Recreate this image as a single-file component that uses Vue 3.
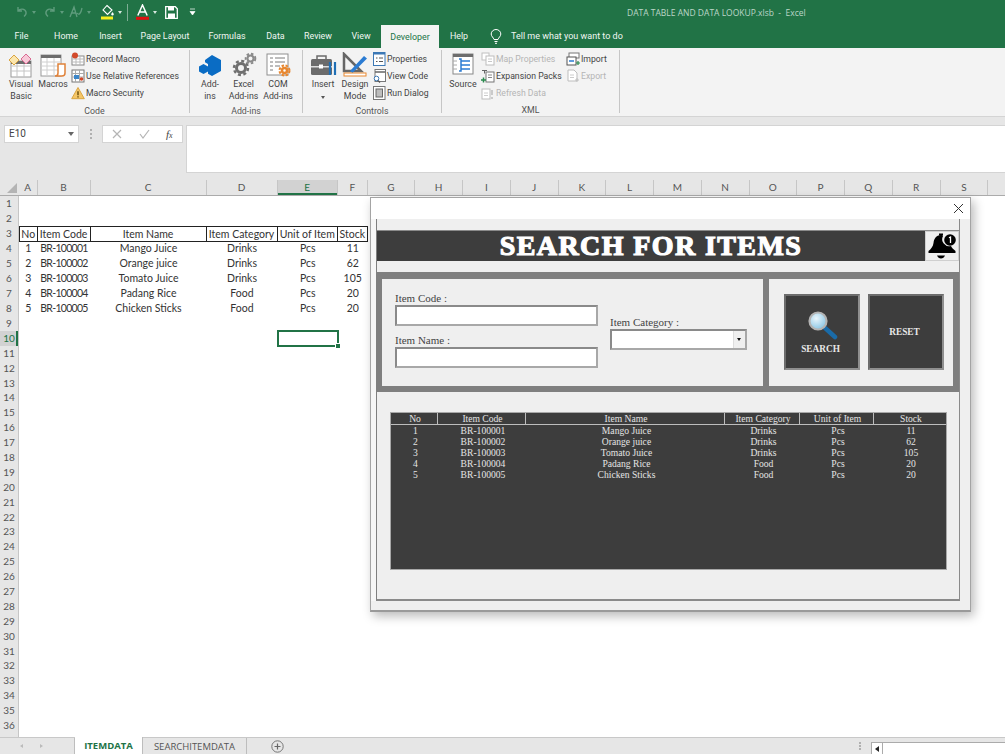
<script setup>
const tabs = ['File','Home','Insert','Page Layout','Formulas','Data','Review','View','Developer','Help']
const cols = ['A','B','C','D','E','F','G','H','I','J','K','L','M','N','O','P','Q','R','S']
const rows = Array.from({ length: 37 }, (_, i) => i + 1)
const sheet = {
  3: ['No','Item Code','Item Name','Item Category','Unit of Item','Stock'],
  4: ['1','BR-100001','Mango Juice','Drinks','Pcs','11'],
  5: ['2','BR-100002','Orange juice','Drinks','Pcs','62'],
  6: ['3','BR-100003','Tomato Juice','Drinks','Pcs','105'],
  7: ['4','BR-100004','Padang Rice','Food','Pcs','20'],
  8: ['5','BR-100005','Chicken Sticks','Food','Pcs','20']
}
const blank = ['','','','','','']
const cellsOf = r => sheet[r] || blank
const formHead = ['No','Item Code','Item Name','Item Category','Unit of Item','Stock']
const formRows = [4,5,6,7,8].map(r => sheet[r])
</script>

<template>
  <div class="app">
    <header class="titlebar">
      <div class="qat">
        <svg class="q q-undo" width="14" height="14" viewBox="0 0 14 14"><path d="M3 2v4h4M3 6c2-2.600 7-2.600 8 1 .4 1.800-.6 3.500-2 4.500" fill="none" stroke="#5f9c7d" stroke-width="1.400"/></svg>
        <span class="chev dim q-c1"></span>
        <svg class="q q-redo" width="14" height="14" viewBox="0 0 14 14"><path d="M11 2v4H7M11 6C9 3.400 4 3.400 3 7c-.4 1.800.6 3.500 2 4.500" fill="none" stroke="#5f9c7d" stroke-width="1.400"/></svg>
        <span class="chev dim q-c2"></span>
        <svg class="q q-rep" width="14" height="14" viewBox="0 0 14 14"><path d="M1 12 5 2l3 10M3 8h4M8 8c2 3 4 0 5-5" fill="none" stroke="#5f9c7d" stroke-width="1.300"/></svg>
        <span class="chev dim q-c3"></span>
        <svg class="q q-fill" width="14" height="16" viewBox="0 0 14 16"><path d="M6 1.500 11 6 6.500 10.500 2 6z" fill="#217346" stroke="#fff" stroke-width="1.100"/><path d="M11.500 8c.8 1 1.200 1.600 1.200 2.200a1.200 1.200 0 0 1-2.400 0c0-.6.400-1.200 1.200-2.200z" fill="#fff"/><rect x="0" y="12.500" width="12" height="3" fill="#f4ee1c"/></svg>
        <span class="chev q-c4"></span>
        <i class="q-sep"></i>
        <svg class="q q-font" width="13" height="16" viewBox="0 0 13 16"><path d="M1.800 11.500 6.500 1l4.700 10.500M3.500 8h6" fill="none" stroke="#fff" stroke-width="1.500"/><rect x="0" y="12.800" width="13" height="3" fill="#e01010"/></svg>
        <span class="chev q-c5"></span>
        <svg class="q q-save" width="13" height="13" viewBox="0 0 13 13"><path d="M.7.700h9.600l2 2v9.600H.7z" fill="none" stroke="#fff" stroke-width="1.300"/><rect x="3" y="1" width="6" height="3.500" fill="#fff"/><rect x="3" y="7.500" width="7" height="4.500" fill="#fff"/></svg>
        <svg class="q q-cust" width="7" height="8" viewBox="0 0 7 8"><path d="M1 1h5M1 3.500h5L3.500 7z" fill="#fff" stroke="#fff" stroke-width=".7"/></svg>
      </div>
      <div class="doc">DATA TABLE AND DATA LOOKUP.xlsb &nbsp;-&nbsp; Excel</div>
    </header>

    <nav class="tabbar">
      <span v-for="t in tabs" :key="t" class="tab" :class="{ on: t === 'Developer' }">{{ t }}</span>
      <span class="tell">
        <svg width="12" height="15" viewBox="0 0 12 15"><path d="M4 10.500C3.500 8.500 1.200 7.500 1.200 5a4.800 4.500 0 0 1 9.600 0c0 2.500-2.300 3.500-2.800 5.500zM4.500 12.500h3M5 14.300h2" fill="none" stroke="#fff" stroke-width="1"/></svg>
        <b>Tell me what you want to do</b>
      </span>
    </nav>

    <section class="ribbon">
      <div class="grp g-code">
        <div class="items">
          <div class="big w34">
            <svg class="ico" width="28" height="26" viewBox="0 0 28 26"><rect x="4" y="9" width="20" height="16" fill="#fff" stroke="#9a9a9a"/><path d="M4 14h20M4 19h20M10 9v16M17 9v16" stroke="#c4c4c4"/><rect x="4" y="9" width="20" height="3" fill="#6d6d6d"/><path d="m7 3 5 5-5 5-5-5z" fill="#fbe6ad" stroke="#d9a441"/><path d="m19 2 5 5-5 5-5-5z" fill="#f7c9d8" stroke="#d96a92"/></svg>
            <span>Visual<br>Basic</span>
          </div>
          <div class="big w30">
            <svg class="ico" width="28" height="26" viewBox="0 0 28 26"><rect x="2" y="3" width="20" height="21" fill="#fff" stroke="#9a9a9a"/><rect x="2" y="3" width="20" height="3" fill="#6d6d6d"/><path d="M2 10h20M2 14h20M2 18h20M8 6v18M15 6v18" stroke="#d0d0d0"/><path d="M19 12h7v9a3 3 0 0 1-3 3h-7c2 0 3-1 3-3z" fill="#fff" stroke="#e0823a" stroke-width="1.500"/></svg>
            <span>Macros</span>
          </div>
          <div class="stack s-code">
            <div class="sm"><svg width="14" height="14" viewBox="0 0 14 14"><rect x="1" y="4" width="12" height="9" fill="#fff" stroke="#888"/><path d="M1 7h12M1 10h12M5 4v9M9 4v9" stroke="#bbb"/><circle cx="4" cy="3.500" r="3" fill="#d2492a"/></svg>Record Macro</div>
            <div class="sm"><svg width="14" height="14" viewBox="0 0 14 14"><rect x="1" y="1" width="12" height="12" fill="#fff" stroke="#777"/><path d="M1 4.500h12M1 8h12M4.500 1v12M8.500 1v12" stroke="#aaa"/><rect x="3" y="6" width="5" height="4" fill="#3c86c8"/><circle cx="10.500" cy="10" r="1.800" fill="#d2492a"/></svg>Use Relative References</div>
            <div class="sm"><svg width="14" height="14" viewBox="0 0 14 14"><path d="M7 1.500 13.300 12.700H.7z" fill="#f5c667" stroke="#d9a441"/><path d="M7 5.200v4M7 10.200v1.300" stroke="#5a4000" stroke-width="1.300"/></svg>Macro Security</div>
          </div>
        </div>
        <div class="glabel">Code</div>
      </div>

      <div class="grp g-addins">
        <div class="items">
          <div class="big w34">
            <svg class="ico" width="28" height="26" viewBox="0 0 28 26"><path d="m16 3 9 5v11l-9 5-4-2.300V12l-3-1.700V8z" fill="#0a6cc4"/><path d="m7.500 12 4.500 2.500v5L7.500 22 3 19.500v-5z" fill="#0a6cc4"/></svg>
            <span>Add-<br>ins</span>
          </div>
          <div class="big w33">
            <svg class="ico" width="28" height="26" viewBox="0 0 28 26"><circle cx="11" cy="16" r="4.500" fill="none" stroke="#6f6f6f" stroke-width="3"/><circle cx="11" cy="16" r="7" fill="none" stroke="#6f6f6f" stroke-width="2.500" stroke-dasharray="3 2.500"/><circle cx="20.500" cy="6.500" r="3" fill="none" stroke="#8a8a8a" stroke-width="2"/><circle cx="20.500" cy="6.500" r="4.800" fill="none" stroke="#8a8a8a" stroke-width="2" stroke-dasharray="2.500 2"/></svg>
            <span>Excel<br>Add-ins</span>
          </div>
          <div class="big w36">
            <svg class="ico" width="28" height="26" viewBox="0 0 28 26"><rect x="3" y="2" width="21" height="21" fill="#fff" stroke="#8f8f8f"/><path d="M6 6h3M11 6h10M6 10h3M11 10h10M6 14h3M11 14h5M6 18h3" stroke="#7a7a7a"/><circle cx="20.500" cy="18.500" r="2.500" fill="none" stroke="#e8872f" stroke-width="2.500"/><circle cx="20.500" cy="18.500" r="5" fill="none" stroke="#e8872f" stroke-width="2" stroke-dasharray="2.500 1.500"/></svg>
            <span>COM<br>Add-ins</span>
          </div>
        </div>
        <div class="glabel">Add-ins</div>
      </div>

      <div class="grp g-ctrl">
        <div class="items">
          <div class="big w32">
            <svg class="ico" width="28" height="26" viewBox="0 0 28 26"><path d="M8 7V4h9v3" fill="none" stroke="#6b6b6b" stroke-width="1.500"/><rect x="2" y="7" width="21" height="16" rx="1.500" fill="#6b6b6b"/><rect x="2" y="14" width="21" height="1.500" fill="#ddd"/><rect x="10" y="12.500" width="4" height="4" fill="#fff"/><path d="M21 10v13M26 10v13" stroke="#1f6fb5" stroke-width="2.200"/></svg>
            <span>Insert<br><i class="chev dark"></i></span>
          </div>
          <div class="big w32">
            <svg class="ico" width="28" height="26" viewBox="0 0 28 26"><path d="M3 2v17h17z" fill="none" stroke="#666" stroke-width="2.500"/><path d="M9 19 23 4l3 2.500L11.500 21z" fill="#2b7cd3"/><rect x="3" y="21" width="22" height="3" fill="#fff" stroke="#e8872f"/></svg>
            <span>Design<br>Mode</span>
          </div>
          <div class="stack s-ctrl">
            <div class="sm"><svg width="13" height="14" viewBox="0 0 13 14"><rect x=".5" y=".5" width="11.500" height="13" fill="#fff" stroke="#3c78b5"/><rect x=".5" y=".5" width="11.500" height="2" fill="#3c78b5"/><path d="M3 6h1.500M6 6h4M3 9.500h1.500M6 9.500h4" stroke="#555"/></svg>Properties</div>
            <div class="sm"><svg width="13" height="14" viewBox="0 0 13 14"><rect x="2" y=".5" width="10.500" height="12" fill="#fff" stroke="#777"/><path d="M2 3h10" stroke="#666" stroke-width="1.500"/><circle cx="3.500" cy="9.500" r="2.300" fill="#fff" stroke="#3c78b5"/><path d="M5 11.500l2 2" stroke="#555" stroke-width="1.200"/></svg>View Code</div>
            <div class="sm"><svg width="13" height="14" viewBox="0 0 13 14"><rect x=".5" y=".5" width="11.500" height="13" fill="#fff" stroke="#777"/><rect x="3" y="3" width="6.500" height="8" fill="#bdbdbd" stroke="#666"/></svg>Run Dialog</div>
          </div>
        </div>
        <div class="glabel">Controls</div>
      </div>

      <div class="grp g-xml">
        <div class="items">
          <div class="big w34">
            <svg class="ico" width="28" height="26" viewBox="0 0 28 26"><rect x="4" y="2" width="20" height="20" fill="#fff" stroke="#888"/><rect x="4" y="2" width="20" height="3" fill="#6d6d6d"/><path d="M4 9h4M4 13h4M4 17h4" stroke="#aaa"/><path d="M10 7h2v12h-2M12 9h9M12 13h9M12 17h9" fill="none" stroke="#2b7cd3" stroke-width="1.500"/></svg>
            <span>Source</span>
          </div>
          <div class="stack s-xml1">
            <div class="sm off"><svg width="14" height="14" viewBox="0 0 14 14"><rect x="1" y="1" width="7" height="7" fill="#fff" stroke="#c0c0c0"/><rect x="5" y="4" width="8" height="9" fill="#fff" stroke="#bdbdbd"/><path d="M7 7h4M7 9.500h4" stroke="#c8c8c8"/></svg>Map Properties</div>
            <div class="sm"><svg width="14" height="14" viewBox="0 0 14 14"><rect x="5" y="3" width="8" height="10" fill="#fff" stroke="#777"/><path d="M7 6h4M7 8.500h4" stroke="#888"/><path d="M1 1.500h5M3.500 1.500v3" stroke="#666"/><path d="M0 11h5M2.500 8.500v5" stroke="#2a8a4e" stroke-width="1.500"/></svg>Expansion Packs</div>
            <div class="sm off"><svg width="14" height="14" viewBox="0 0 14 14"><rect x="1" y="3" width="8" height="10" fill="#fff" stroke="#bdbdbd"/><path d="M11 4v5M11 11v2" stroke="#bdbdbd" stroke-width="1.500"/><path d="M3 7h4M3 9.500h4" stroke="#ccc"/></svg>Refresh Data</div>
          </div>
          <div class="stack">
            <div class="sm"><svg width="14" height="14" viewBox="0 0 14 14"><rect x="3" y="1" width="10" height="5" fill="#fff" stroke="#777"/><rect x="1" y="5" width="9" height="8" fill="#fff" stroke="#555"/><path d="M3 9h5" stroke="#2b7cd3" stroke-width="1.500"/><path d="M10 11h4M12 9v4" stroke="#2a8a4e" stroke-width="1.200"/></svg>Import</div>
            <div class="sm off"><svg width="14" height="14" viewBox="0 0 14 14"><path d="M2 1h6l3 3v8H2z" fill="#fff" stroke="#bdbdbd"/><path d="M4 6h4M4 8.500h4" stroke="#ccc"/><path d="M9 11h4M11 9v4" stroke="#c0c0c0"/></svg>Export</div>
          </div>
        </div>
        <div class="glabel">XML</div>
      </div>
    </section>

    <section class="formula">
      <div class="namebox">E10<span class="drop"></span></div>
      <div class="grip"><i></i><i></i><i></i></div>
      <div class="fxbox">
        <svg width="10" height="10" viewBox="0 0 10 10"><path d="m1 1 8 8M9 1 1 9" stroke="#b5b5b5" stroke-width="1.200"/></svg>
        <svg width="11" height="10" viewBox="0 0 11 10"><path d="m1 5 3 4 6-8" fill="none" stroke="#b5b5b5" stroke-width="1.200"/></svg>
        <em>f<small>x</small></em>
      </div>
      <div class="fbar"></div>
    </section>

    <section class="sheet">
      <div class="line head">
        <div class="corner"><svg width="12" height="12" viewBox="0 0 12 12"><path d="M11 1v10H1z" fill="#b4b4b4"/></svg></div>
        <div v-for="c in cols" :key="c" class="colh" :class="{ sel: c === 'E' }">{{ c }}</div>
        <div class="colh rest"></div>
      </div>
      <div class="cells">
        <div v-for="r in rows" :key="r" class="line">
          <div class="rowh" :class="{ sel: r === 10 }">{{ r < 37 ? r : '' }}</div>
          <div
            v-for="(v, i) in cellsOf(r)"
            :key="i"
            class="cell"
            :class="{ hd: r === 3, code: i === 1 && r > 3, active: r === 10 && i === 4 }"
          >{{ v }}</div>
        </div>
      </div>

      <div class="dialog">
        <div class="dtitle">
          <svg width="11" height="11" viewBox="0 0 11 11"><path d="m1 1 9 9M10 1l-9 9" stroke="#333" stroke-width="1"/></svg>
        </div>
        <div class="dmid">
          <div class="dleft"></div>
          <div class="client">
            <div class="strip top"></div>
            <div class="banner">
              <h1>SEARCH FOR ITEMS</h1>
              <div class="bell">
                <svg width="32" height="28" viewBox="0 0 32 28"><path d="M15 3c-5 0-7 4-7.500 8-.4 3.500-2.500 6-5 8v2h27v-2c-2-1.500-3.500-3-4.500-5A7 7 0 0 1 17 4c-.4-.6-1-1-2-1z" fill="#000"/><path d="M13 1.500h4v2h-4zM11 23.500h8c-.8 2-2.200 3-4 3s-3.200-1-4-3z" fill="#000"/><circle cx="24" cy="8" r="5.800" fill="#000"/><path d="M23 5.800 24.500 5v6" fill="none" stroke="#fff" stroke-width="1.300"/></svg>
              </div>
            </div>
            <div class="strip mid"></div>
            <div class="band">
              <div class="panel fields">
                <div class="fcol">
                  <label>Item Code :</label>
                  <div class="input"></div>
                  <label class="second">Item Name :</label>
                  <div class="input"></div>
                </div>
                <div class="ccol">
                  <label>Item Category :</label>
                  <div class="combo"><span class="combobtn"></span></div>
                </div>
              </div>
              <div class="panel actions">
                <div class="btn">
                  <svg width="32" height="30" viewBox="0 0 32 30">
                    <defs><radialGradient id="lens" cx=".4" cy=".35" r=".7"><stop offset="0" stop-color="#eaf6fc"/><stop offset="1" stop-color="#86c4e4"/></radialGradient></defs>
                    <path d="m18 17 11 10" stroke="#1a6ba8" stroke-width="4.500" stroke-linecap="round"/>
                    <circle cx="12" cy="11" r="8.500" fill="url(#lens)" stroke="#b4b4b4" stroke-width="2.200"/>
                  </svg>
                  <span>SEARCH</span>
                </div>
                <div class="btn"><span>RESET</span></div>
              </div>
            </div>
            <div class="lower">
              <div class="results">
                <div class="rhead">
                  <span v-for="h in formHead" :key="h">{{ h }}</span>
                </div>
                <div v-for="fr in formRows" :key="fr[0]" class="rrow">
                  <span v-for="(v, i) in fr" :key="i">{{ v }}</span>
                </div>
              </div>
            </div>
          </div>
          <div class="dright"></div>
        </div>
        <div class="dfoot"></div>
      </div>
    </section>

    <footer class="sheetbar">
      <div class="nav"><i class="tri l"></i><i class="tri r"></i></div>
      <div class="stab on">ITEMDATA</div>
      <div class="stab">SEARCHITEMDATA</div>
      <svg class="plus" width="13" height="13" viewBox="0 0 13 13"><circle cx="6.500" cy="6.500" r="5.700" fill="none" stroke="#777"/><path d="M6.500 3.500v6M3.500 6.500h6" stroke="#666" stroke-width="1.200"/></svg>
      <div class="dots"><i></i><i></i><i></i></div>
      <div class="hscroll"><span class="harrow"></span></div>
    </footer>
  </div>
</template>

<style>
html, body { margin: 0; background: #fff; }
</style>

<style scoped>
.app {
  width: 1005px; height: 754px; overflow: hidden;
  display: flex; flex-direction: column;
  font-family: Roboto, "Open Sans", "Liberation Sans", sans-serif;
  background: #fff; color: #444;
}
.titlebar { height: 24px; background: #217346; display: flex; align-items: center; flex: none; }
.qat { display: flex; align-items: center; width: 627px; flex: none; }
.q { flex: none; }
.q-undo { margin-left: 15px; }
.q-c1 { margin-left: 3px; }
.q-redo { margin-left: 7px; }
.q-c2 { margin-left: 3px; }
.q-rep { margin-left: 5px; }
.q-c3 { margin-left: 4px; }
.q-fill { margin-left: 10px; }
.q-c4 { margin-left: 3px; }
.q-sep { width: 1px; height: 17px; background: #7fae95; margin-left: 5px; }
.q-font { margin-left: 8px; }
.q-c5 { margin-left: 4px; }
.q-save { margin-left: 8px; }
.q-cust { margin-left: 11px; }
.chev { width: 0; height: 0; display: inline-block; border: 2.500px solid transparent; border-top: 3px solid #d8e8df; border-bottom: 0; }
.chev.dim { border-top-color: #5f9c7d; }
.chev.dark { border-top-color: #555; }
.doc { font-family: "Open Sans", sans-serif; font-size: 8.500px; color: #bcd6c8; white-space: nowrap; }

.tabbar {
  height: 24px; background: #217346; flex: none;
  display: grid; grid-template-columns: 43px 46px 43px 66px 58px 39px 46px 40px 58px 40px auto;
  align-items: stretch;
}
.tab { color: #f0f6f2; font-size: 8.900px; display: flex; align-items: center; justify-content: center; }
.tab.on { background: #f3f3f3; color: #217346; margin-top: 1px; }
.tell { display: flex; align-items: center; gap: 9px; padding-left: 11px; color: #f0f6f2; white-space: nowrap; }
.tell b { font-weight: 400; font-size: 9px; }

.ribbon { height: 69px; background: #f3f3f3; border-bottom: 1px solid #d4d4d4; box-sizing: border-box; display: flex; flex: none; padding-top: 2px; }
.grp { display: flex; flex-direction: column; border-right: 1px solid #c6c6c6; height: 63px; box-sizing: border-box; flex: none; }
.g-code { width: 190px; }
.g-addins { width: 113px; }
.g-ctrl { width: 139px; }
.g-xml { width: 178px; }
.items { display: flex; height: 52px; padding-left: 4px; }
.g-addins .items { padding-left: 3px; }
.big { display: flex; flex-direction: column; align-items: center; font-size: 8.800px; line-height: 12px; text-align: center; color: #444; flex: none; white-space: nowrap; }
.big .ico { margin-top: 2px; height: 26px; flex: none; }
.w30 { width: 30px; } .w32 { width: 32px; } .w33 { width: 33px; } .w34 { width: 34px; } .w36 { width: 36px; }
.stack { display: flex; flex-direction: column; }
.s-code { margin-left: 3px; }
.s-ctrl { margin-left: 2px; }
.s-xml1 { margin-left: 1px; width: 85px; }
.sm { height: 17px; display: flex; align-items: center; gap: 1px; font-size: 8.700px; color: #444; white-space: nowrap; }
.sm svg { flex: none; }
.sm.off { color: #b5b5b5; }
.glabel { text-align: center; font-size: 8.800px; line-height: 12px; color: #555; margin-top: 3px; }

.formula { height: 63px; background: #e6e6e6; flex: none; display: flex; align-items: flex-start; padding-top: 8px; box-sizing: border-box; }
.namebox {
  margin-left: 4px; width: 75px; height: 18px; background: #fff; border: 1px solid #d4d4d4; box-sizing: border-box;
  font-size: 10px; line-height: 16px; padding-left: 4px; color: #444; position: relative;
}
.drop { position: absolute; right: 4px; top: 6px; border: 3px solid transparent; border-top: 4px solid #666; border-bottom: 0; }
.grip { width: 23px; height: 18px; display: flex; flex-direction: column; align-items: center; justify-content: center; gap: 2px; }
.grip i { width: 2px; height: 2px; background: #b0b0b0; }
.fxbox {
  width: 81px; height: 18px; background: #fff; border: 1px solid #d4d4d4; box-sizing: border-box;
  display: flex; align-items: center; padding-left: 9px; gap: 17px;
}
.fxbox em { font-family: "Liberation Serif", serif; font-size: 11px; color: #444; margin-left: -1px; }
.fxbox small { font-size: 8px; }
.fbar { flex: 1; height: 48px; margin-left: 3px; background: #fff; border: 1px solid #d4d4d4; border-right: 0; box-sizing: border-box; }

.sheet { position: relative; flex: 1; min-height: 0; overflow: hidden; background: #fff; }
.line {
  display: grid; height: 14.900px;
  grid-template-columns: 19px 18.500px 53px 116px 71px 60.500px 29.500px repeat(13, 47.750px) 1fr;
}
.cells .line:nth-child(-n+8) { height: 15px; }
.head { height: 15px; background: #e6e6e6; border-bottom: 1px solid #ababab; box-sizing: content-box; }
.corner { display: flex; align-items: flex-end; justify-content: flex-end; padding: 0 1px 1px 0; }
.colh { font-size: 10px; line-height: 15px; text-align: center; color: #555; border-right: 1px solid #c6c6c6; box-sizing: border-box; min-width: 0; font-family: Lato, "Liberation Sans", sans-serif; }
.colh.sel { background: #d2d2d2; color: #217346; box-shadow: inset 0 -2px 0 #217346; }
.colh.rest { border-right: 0; }
.cells { height: 541px; overflow: hidden; }
.rowh {
  background: #e6e6e6; border-right: 1px solid #c6c6c6; box-sizing: border-box;
  font-size: 10px; line-height: 15px; text-align: center; color: #555; font-family: Lato, "Liberation Sans", sans-serif;
}
.rowh.sel { background: #d2d2d2; color: #217346; box-shadow: inset -2px 0 0 #217346; }
.cell {
  font-family: Lato, "Liberation Sans", sans-serif; font-size: 10.500px; line-height: 15px;
  text-align: center; color: #333; white-space: nowrap; min-width: 0; box-sizing: border-box;
}
.cell.code { letter-spacing: -.7px; }
.cell.hd { border: 1px solid #222; border-left-width: 0; line-height: 14px; }
.cell.hd:nth-child(2) { border-left-width: 1px; }
.cell.active { outline: 2px solid #217346; outline-offset: -1px; position: relative; }
.cell.active::after { content: ""; position: absolute; right: -2px; bottom: -2px; width: 4px; height: 4px; background: #217346; border: 1px solid #fff; box-sizing: content-box; margin: -1px; }

.dialog {
  position: absolute; left: 370px; top: 17px; width: 601px; height: 415px;
  background: #efefef; border: 1px solid #a4a4a4; border-bottom: 2px solid #9a9a9a; box-sizing: border-box;
  box-shadow: 3px 4px 10px rgba(0,0,0,.28);
  display: flex; flex-direction: column;
  font-family: "Liberation Serif", "Times New Roman", serif;
}
.dtitle { height: 21px; background: #fff; flex: none; display: flex; align-items: center; justify-content: flex-end; padding-right: 6px; }
.dmid { flex: 1; display: flex; min-height: 0; }
.dleft { width: 5px; background: #f6f6f6; flex: none; }
.dright { width: 10px; flex: none; }
.dfoot { height: 9px; flex: none; }
.client { flex: 1; min-width: 0; border-left: 1px solid #7f7f7f; border-right: 1px solid #8a8a8a; border-bottom: 2px solid #8a8a8a; display: flex; flex-direction: column; }
.strip.top { height: 11px; background: #efefef; border-bottom: 1px solid #8a8a8a; flex: none; }
.banner { height: 30px; background: #3d3d3d; display: flex; flex: none; }
.banner h1 {
  flex: 1; margin: 0; text-align: center; color: #fff; font-size: 28px; line-height: 30px; font-weight: 700;
  -webkit-text-stroke: 1.200px #fff; letter-spacing: 1.400px; white-space: nowrap;
}
.bell { width: 34px; background: #efefef; display: flex; align-items: center; justify-content: center; border: 1px solid #cfcfcf; box-sizing: border-box; }
.strip.mid { height: 11px; flex: none; }
.band { height: 120px; background: #7f7f7f; padding: 7px 6px 6px 5px; box-sizing: border-box; display: flex; gap: 6px; flex: none; }
.panel { background: #efefef; box-sizing: border-box; height: 107px; }
.fields { width: 381px; padding: 14px 0 0 13px; display: flex; gap: 12px; }
.fcol { width: 203px; flex: none; }
.fields label { display: block; font-size: 11px; line-height: 10px; padding-bottom: 2px; color: #444; white-space: nowrap; }
.input { height: 21px; background: #fff; border: 2px solid #8a8a8a; border-right-color: #a8a8a8; border-bottom-color: #a8a8a8; box-sizing: border-box; }
.second { margin-top: 9px; }
.ccol { margin-top: 24px; flex: none; width: 137px; }
.combo { height: 21px; background: #fff; border: 2px solid #8a8a8a; border-right-color: #a8a8a8; border-bottom-color: #a8a8a8; box-sizing: border-box; display: flex; justify-content: flex-end; }
.combobtn { width: 11px; background: #efefef; border-left: 1px solid #ddd; position: relative; }
.combobtn::after { content: ""; position: absolute; left: 3px; top: 7px; border: 2.500px solid transparent; border-top: 3px solid #111; border-bottom: 0; }
.actions { width: 184px; padding: 15px 0 0 15px; display: flex; gap: 8px; }
.btn {
  width: 76px; height: 76px; background: #3d3d3d; border: 2px solid #8f8f8f; border-top-color: #6c6c6c; border-left-color: #6c6c6c;
  box-sizing: border-box; display: flex; flex-direction: column; align-items: center; justify-content: center; color: #e8e8e8;
  font-weight: 700; font-size: 9.300px; padding: 0 3px 1px 0;
}
.btn svg { margin: 0 0 4px 3px; }
.lower { flex: 1; padding: 20px 0 0 13px; min-height: 0; }
.results { width: 557px; height: 158px; background: #3d3d3d; border: 1px solid #a8a8a8; box-sizing: border-box; }
.rhead, .rrow { display: grid; grid-template-columns: 47px 88px 199px 75px 74px 1fr; color: #e4e4e4; font-size: 9.600px; text-align: center; }
.rhead { height: 11px; line-height: 11px; border-bottom: 1px solid #bdbdbd; box-sizing: content-box; }
.rhead span { border-right: 1px solid #bdbdbd; }
.rhead span:last-child { border-right: 0; }
.rhead span, .rrow span { padding-left: 2px; box-sizing: border-box; }
.rrow { height: 11.100px; line-height: 11px; }

.sheetbar { height: 17px; background: #e6e6e6; border-top: 1px solid #c8c8c8; box-sizing: border-box; display: flex; align-items: stretch; flex: none; }
.nav { width: 75px; border-right: 1px solid #bdbdbd; box-sizing: border-box; display: flex; align-items: center; gap: 17px; padding-left: 20px; }
.tri { width: 0; height: 0; border: 2.500px solid transparent; }
.tri.l { border-right: 3px solid #bbb; border-left: 0; }
.tri.r { border-left: 3px solid #bbb; border-right: 0; }
.stab { font-size: 9.500px; display: flex; align-items: center; justify-content: center; color: #555; width: 104px; border-right: 1px solid #bdbdbd; box-sizing: border-box; font-family: "Open Sans", sans-serif; }
.stab.on { width: 68px; background: #fff; color: #217346; font-weight: 700; margin-top: -1px; }
.plus { align-self: center; margin-left: 24px; flex: none; }
.dots { margin-left: 575px; width: 3px; display: flex; flex-direction: column; justify-content: center; gap: 1px; }
.dots i { width: 2px; height: 2px; background: #b0b0b0; }
.hscroll { margin-left: 9px; flex: 1; margin-top: 4px; background: #fff; border: 1px solid #ababab; border-right: 0; border-bottom: 0; position: relative; }
.harrow { position: absolute; left: 0; top: 0; width: 10px; height: 100%; border-right: 1px solid #ababab; box-sizing: content-box; }
.harrow::after { content: ""; position: absolute; left: 3px; top: 3px; border: 3px solid transparent; border-right: 4px solid #222; border-left: 0; }
</style>
